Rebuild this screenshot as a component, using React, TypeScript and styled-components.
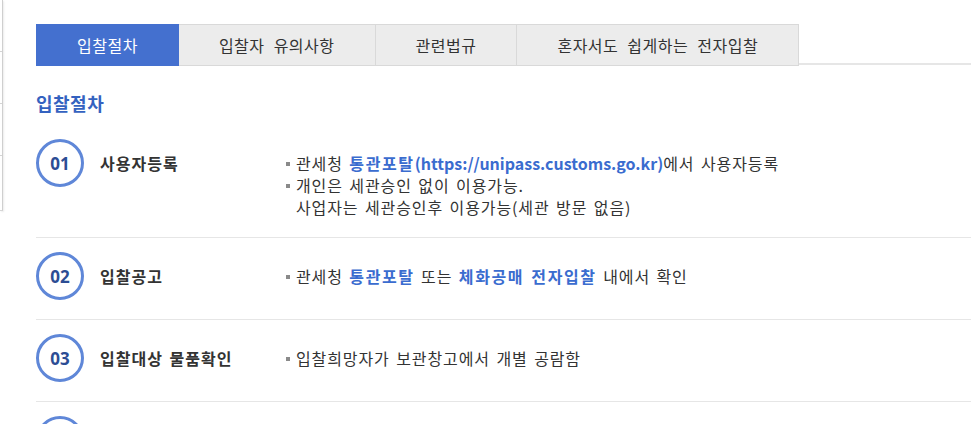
import React from "react";
import styled, { createGlobalStyle } from "styled-components";

const GlobalStyle = createGlobalStyle`
  html, body {
    margin: 0;
    padding: 0;
    background: #ffffff;
    overflow: hidden;
  }
  body {
    font-family: "Noto Sans CJK KR", "Noto Sans", sans-serif;
    color: #333333;
  }
`;

const Link = styled.span<{ $url?: boolean }>`
  color: #3a6ccf;
  font-weight: 700;
  letter-spacing: ${(p) => (p.$url ? "0" : "1.6px")};
`;

type Step = {
  no: string;
  title: string;
  lines: React.ReactNode[];
};

const steps: Step[] = [
  {
    no: "01",
    title: "사용자등록",
    lines: [
      <>
        관세청 <Link>통관포탈</Link>
        <Link $url>(https://unipass.customs.go.kr)</Link>에서 사용자등록
      </>,
      <>
        개인은 세관승인 없이 이용가능.
        <br />
        사업자는 세관승인후 이용가능(세관 방문 없음)
      </>,
    ],
  },
  {
    no: "02",
    title: "입찰공고",
    lines: [
      <>
        관세청 <Link>통관포탈</Link> 또는 <Link>체화공매 전자입찰</Link> 내에서 확인
      </>,
    ],
  },
  {
    no: "03",
    title: "입찰대상 물품확인",
    lines: [<>입찰희망자가 보관창고에서 개별 공람함</>],
  },
  {
    no: "04",
    title: "",
    lines: [],
  },
];

const tabs = ["입찰절차", "입찰자 유의사항", "관련법규", "혼자서도 쉽게하는 전자입찰"];

export default function App() {
  return (
    <>
      <GlobalStyle />
      <Page>
        <Sidebar>
          <SideItem />
          <SideItem />
          <SideItem />
          <SideItem />
        </Sidebar>
        <Main>
          <TabBar>
            {tabs.map((t, i) => (
              <Tab key={t} $active={i === 0}>
                {t}
              </Tab>
            ))}
            <TabFiller />
          </TabBar>
          <Heading>입찰절차</Heading>
          <StepList>
            {steps.map((s) => (
              <StepRow key={s.no}>
                <Circle>{s.no}</Circle>
                <StepTitle>{s.title}</StepTitle>
                <Desc>
                  {s.lines.map((l, i) => (
                    <DescItem key={i}>
                      <span>{l}</span>
                    </DescItem>
                  ))}
                </Desc>
              </StepRow>
            ))}
          </StepList>
        </Main>
      </Page>
    </>
  );
}

const Page = styled.div`
  display: flex;
  align-items: flex-start;
  width: 971px;
  height: 424px;
  overflow: hidden;
`;

const Sidebar = styled.div`
  width: 2px;
  flex: none;
  display: flex;
  flex-direction: column;
  border-right: 1px solid #cfcfcf;
  border-bottom: 1px solid #d6d6d6;
  box-shadow: 1px 1px 2px rgba(0, 0, 0, 0.08);
`;

const SideItem = styled.div`
  height: 51px;
  border-bottom: 1px solid #d4d4d4;
  &:last-child {
    border-bottom: none;
    height: 54px;
  }
`;

const Main = styled.div`
  flex: 1;
  margin-left: 33px;
  padding-top: 24px;
  min-width: 0;
`;

const TabBar = styled.div`
  display: flex;
  align-items: stretch;
  height: 42px;
`;

const Tab = styled.div<{ $active?: boolean }>`
  display: flex;
  align-items: center;
  justify-content: center;
  padding: 0 40px;
  box-sizing: border-box;
  font-size: 16px;
  letter-spacing: 0.5px;
  word-spacing: 5px;
  white-space: nowrap;
  margin-left: -1px;
  &:first-child {
    margin-left: 0;
  }
  background: ${(p) => (p.$active ? "#4470cf" : "#ececec")};
  color: ${(p) => (p.$active ? "#ffffff" : "#333333")};
  border: 1px solid ${(p) => (p.$active ? "#4470cf" : "#d9d9d9")};
  position: relative;
  z-index: ${(p) => (p.$active ? 1 : 0)};
`;

const TabFiller = styled.div`
  flex: 1;
  border-bottom: 2px solid #e6e6e6;
  margin-bottom: 1px;
`;

const Heading = styled.h2`
  margin: 26px 0 11px;
  font-size: 18px;
  letter-spacing: 0.5px;
  line-height: 22px;
  font-weight: 700;
  color: #3462c0;
`;

const StepList = styled.div`
  display: flex;
  flex-direction: column;
`;

const StepRow = styled.div`
  display: flex;
  align-items: flex-start;
  padding: 14px 0 19px;
  border-bottom: 1px solid #e6e6e6;
`;

const Circle = styled.div`
  width: 48px;
  height: 48px;
  flex: none;
  box-sizing: border-box;
  border: 3px solid #5f87d8;
  border-radius: 50%;
  display: flex;
  align-items: center;
  justify-content: center;
  font-family: "Open Sans", "Noto Sans", sans-serif;
  font-size: 17px;
  font-weight: 700;
  color: #2c4d94;
`;

const StepTitle = styled.div`
  width: 186px;
  flex: none;
  margin-left: 16px;
  line-height: 48px;
  font-size: 16px;
  letter-spacing: 1px;
  word-spacing: 2px;
  font-weight: 700;
  color: #333333;
  white-space: nowrap;
`;

const Desc = styled.ul`
  list-style: none;
  margin: 0;
  padding: 13px 0 0;
  font-size: 16px;
  letter-spacing: 0.9px;
  word-spacing: 2px;
  line-height: 22px;
  color: #333333;
`;

const DescItem = styled.li`
  display: flex;
  align-items: flex-start;
  white-space: nowrap;
  &::before {
    content: "";
    flex: none;
    width: 4px;
    height: 4px;
    margin: 10px 6px 0 0;
    background: #8a8a8a;
  }
`;
